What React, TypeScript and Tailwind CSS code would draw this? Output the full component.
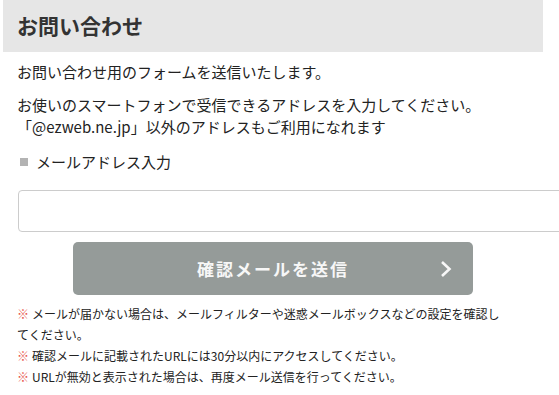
import React from 'react';

const font = { fontFamily: '"Noto Sans CJK JP", "Noto Sans", sans-serif' };

const notes = [
    'メールが届かない場合は、メールフィルターや迷惑メールボックスなどの設定を確認してください。',
    '確認メールに記載されたURLには30分以内にアクセスしてください。',
    'URLが無効と表示された場合は、再度メール送信を行ってください。',
];

const App: React.FC = () => {
    return (
        <div className="w-[559px] h-[395px] overflow-hidden bg-white text-[#222]" style={font}>
            <div className="ml-[3px] w-[540px]">
                {/* Title bar */}
                <div className="h-[52px] bg-[#e6e6e6] px-[14px] flex items-center">
                    <h1 className="text-[21px] font-bold text-[#333] leading-none -mt-[2px]">お問い合わせ</h1>
                </div>

                <div className="px-[14px]">
                    <p className="mt-[9px] text-[15px] leading-[22px]">お問い合わせ用のフォームを送信いたします。</p>
                    <p className="mt-[11px] text-[15px] leading-[22px]">
                        お使いのスマートフォンで受信できるアドレスを入力してください。<br />
                        「@ezweb.ne.jp」以外のアドレスもご利用になれます
                    </p>

                    <div className="mt-[13px] flex items-center gap-[8px] text-[15px] leading-[22px]">
                        <span className="ml-[3px] w-[8px] h-[8px] bg-[#b3b3b3]" />
                        <span>メールアドレス入力</span>
                    </div>

                    <input
                        type="email"
                        className="mt-[17px] ml-[1px] block w-[560px] h-[42px] rounded-[4px] border border-[#cccccc] px-3 text-[15px] outline-none"
                    />

                    <button
                        type="button"
                        className="mt-[10px] mx-auto relative flex items-center justify-center w-[400px] h-[53px] rounded-[5px] bg-[#959b99] text-[#f7f7f7] text-[17px] font-bold tracking-[2px]"
                    >
                        確認メールを送信
                        <svg
                            className="absolute right-[21px] top-1/2 -translate-y-1/2"
                            width="12" height="17" viewBox="0 0 12 17" fill="none"
                        >
                            <path d="M2 1.5 L9.5 8.5 L2 15.5" stroke="#f7f7f7" strokeWidth="2.6" />
                        </svg>
                    </button>

                    <div className="mt-[8px] w-[492px] text-[12px] leading-[21px]">
                        {notes.map(n => (
                            <p key={n}>
                                <span className="text-[#e8574d] mr-[3px]">※</span>{n}
                            </p>
                        ))}
                    </div>
                </div>
            </div>
        </div>
    );
};

export default App;
